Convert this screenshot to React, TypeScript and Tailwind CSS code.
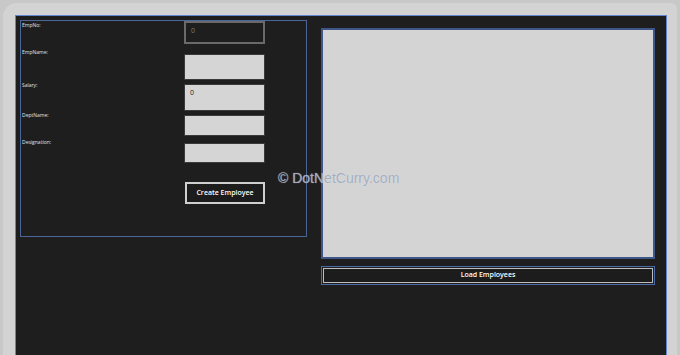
import React from 'react';

const fields = [
  { label: 'EmpNo:', value: '0', mt: 'mt-0', h: 'h-[23px]', readOnly: true, labelMt: 'mt-[1px]' },
  { label: 'EmpName:', value: '', mt: 'mt-[10px]', h: 'h-[26px]', readOnly: false, labelMt: '-mt-[5px]' },
  { label: 'Salary:', value: '0', mt: 'mt-[4px]', h: 'h-[27px]', readOnly: false, labelMt: '-mt-[2px]' },
  { label: 'DeptName:', value: '', mt: 'mt-[4px]', h: 'h-[21px]', readOnly: false, labelMt: '-mt-[3px]' },
  { label: 'Designation:', value: '', mt: 'mt-[7px]', h: 'h-[20px]', readOnly: false, labelMt: '-mt-[4px]' },
];

const App: React.FC = () => {
  return (
    <div
      className="relative w-[680px] h-[355px] overflow-hidden bg-[#c8c8c8]"
      style={{ fontFamily: '"Open Sans", "Liberation Sans", sans-serif' }}
    >
      <div className="ml-[3px] mt-[3px] h-[352px] w-[674px] rounded-tl-[14px] rounded-tr-[6px] bg-[#d3d3d3] pl-[12px] pt-[12px]">
        <div className="flex h-[400px] w-[652px] border border-[#5f86cf] bg-[#1e1e1e]">
          {/* form group */}
          <div className="ml-[4px] mt-[4px] h-[217px] w-[287px] border border-[#4b6596]">
            <div className="flex flex-col">
              {fields.map((f) => (
                <div key={f.label} className={`flex items-start ${f.mt}`}>
                  <div className={`w-[163px] pl-[1px] text-[5px] leading-[6px] text-[#e2e2e2] ${f.labelMt}`}>
                    {f.label}
                  </div>
                  <div
                    className={`w-[81px] ${f.h} px-[5px] pt-[3px] text-[7px] leading-[9px] ${
                      f.readOnly
                        ? 'border-2 border-[#6a6a6a] bg-[#1e1e1e] text-[#7d7d7d]'
                        : 'border border-[#3a3a3a] bg-[#d5d5d5] text-[#222]'
                    }`}
                  >
                    {f.value}
                  </div>
                </div>
              ))}
              <div className="ml-[164px] mt-[19px] flex h-[22px] w-[80px] items-center justify-center border-2 border-[#cfcfcf] bg-[#1c1c1c] text-[7px] font-semibold text-white">
                Create Employee
              </div>
            </div>
          </div>

          {/* list + load */}
          <div className="ml-[14px] mt-[12px] flex flex-col">
            <div className="h-[231px] w-[334px] border-2 border-[#3f5788] bg-[#d4d4d4]" />
            <div className="mt-[7px] h-[19px] w-[334px] border border-[#4a6ba8] p-[1px]">
              <div className="flex h-full w-full items-center justify-center border border-[#bdbdbd] bg-[#1c1c1c] text-[7px] font-semibold text-white">
                Load Employees
              </div>
            </div>
          </div>
        </div>
      </div>

      {/* watermark */}
      <div
        className="absolute left-[278px] top-[168px] text-[14px] text-[#a3adc2]"
        style={{ fontFamily: '"Liberation Sans", Arial, sans-serif', textShadow: '0 0 1px rgba(255,255,255,0.5)' }}
      >
        © DotNetCurry.com
      </div>
    </div>
  );
};

export default App;
